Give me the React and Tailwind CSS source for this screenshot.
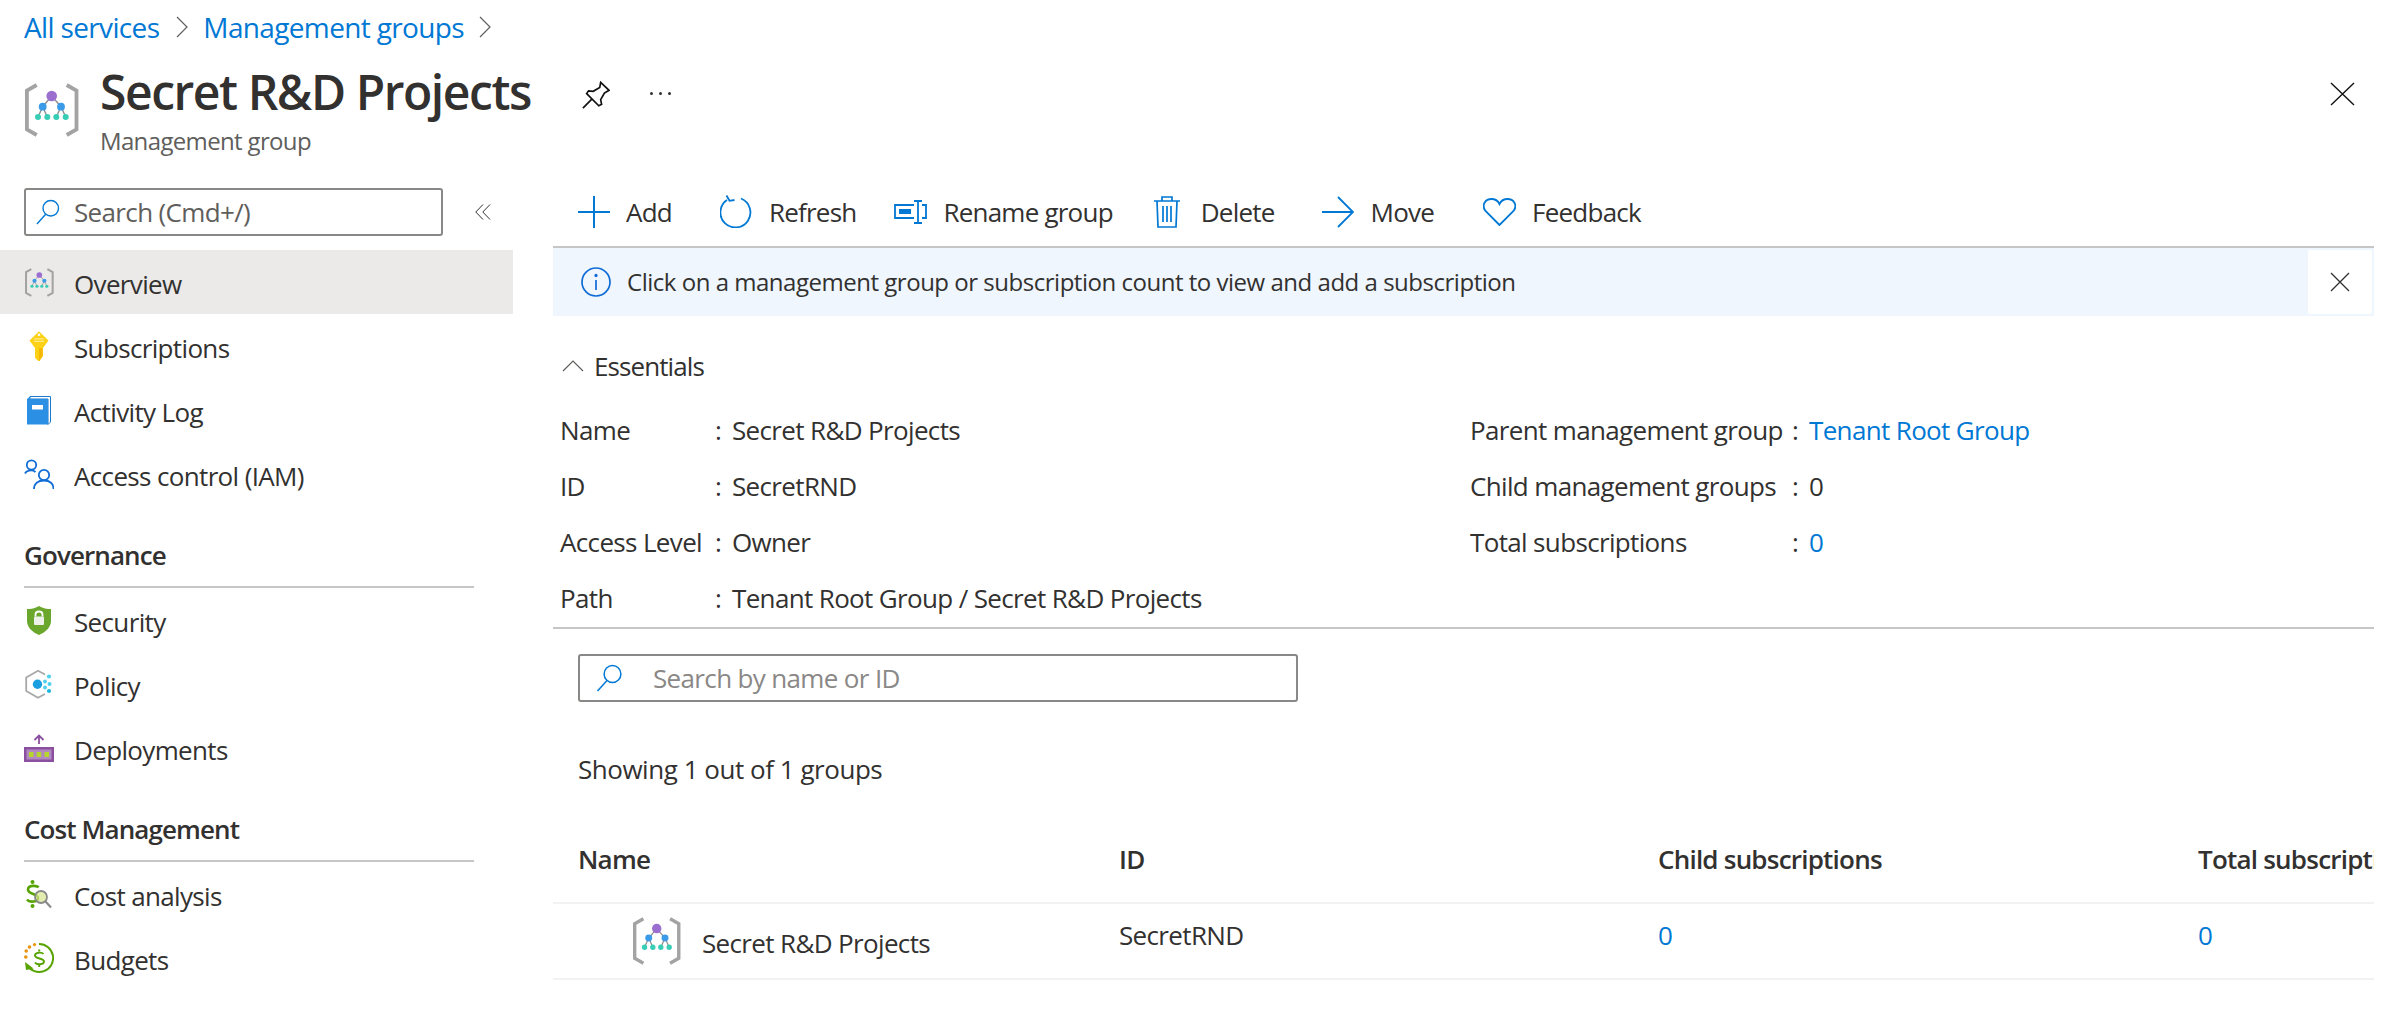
import React from 'react';

const BLUE = '#0078d4';

const GroupIcon = ({ className }) => (
  <svg viewBox="0 0 54 54" className={className} fill="none">
    <path d="M11.7 2 L1.9 7.7 V46.3 L11.7 52" stroke="#a3a3a3" strokeWidth="3.8" />
    <path d="M41.7 2 L51.5 7.7 V46.3 L41.7 52" stroke="#a3a3a3" strokeWidth="3.8" />
    <path d="M26.7 13 L17.7 23.7 L13 34 M17.7 23.7 L22.3 34 M26.7 13 L36 23.7 L31.3 34 M36 23.7 L40.7 34" stroke="#8f8f8f" strokeWidth="1.4" />
    <circle cx="26.7" cy="13" r="5.3" fill="#9a6fd0" />
    <circle cx="17.7" cy="23.7" r="3.9" fill="#3b9be8" />
    <circle cx="36" cy="23.7" r="3.9" fill="#3b9be8" />
    <circle cx="13" cy="34" r="3" fill="#38cdb5" />
    <circle cx="22.3" cy="34" r="3" fill="#38cdb5" />
    <circle cx="31.3" cy="34" r="3" fill="#38cdb5" />
    <circle cx="40.7" cy="34" r="3" fill="#38cdb5" />
  </svg>
);

const SearchIcon = ({ className }) => (
  <svg viewBox="0 0 26 28" className={className} fill="none" stroke={BLUE} strokeWidth="1.5">
    <circle cx="16" cy="10" r="8.4" />
    <path d="M10.5 16.5 L1 27" />
  </svg>
);

const KeyIcon = () => (
  <svg viewBox="0 0 20 30" className="w-[20px] h-[30px]">
    <path d="M10 .8 L19 9.5 L13.5 17 V25 L10 30 L6.5 27 V17 L1 9.5 Z" fill="#fcd116" stroke="#fcd116" strokeWidth="1" strokeLinejoin="round" />
    <path d="M10 17 H13.5 V25 L10 30 Z" fill="#f5b700" />
    <circle cx="10" cy="3.8" r="1.3" fill="#fff" />
    <path d="M5 7.8 H15 M5 10.4 H15" stroke="#ffe98a" strokeWidth="1.2" />
  </svg>
);

const BookIcon = () => (
  <svg viewBox="0 0 24 29" className="w-[24px] h-[29px]">
    <path d="M3 0.5 H23.5 V26 L21 28.5 H21 V3 H3 Z" fill="#fff" stroke="#1f78c8" strokeWidth="1" />
    <path d="M3 0.5 L0 3 V28.5 H21 V3 H3 Z" fill="#2b8fe3" />
    <rect x="5" y="9" width="11" height="4.5" fill="#fff" />
  </svg>
);

const PeopleIcon = () => (
  <svg viewBox="0 0 30 30" className="w-[30px] h-[30px]" fill="none" stroke="#0f6cd6" strokeWidth="1.8">
    <circle cx="7.5" cy="6" r="4.7" />
    <path d="M1 14.5 C2 12.5 4 11.3 7 11.3 C9 11.3 10.5 12 11.5 13" />
    <circle cx="20" cy="16" r="5.2" />
    <path d="M10 30 C10 24.5 14 21.5 20 21.5 C26 21.5 29.5 24.5 29.5 30" />
  </svg>
);

const ShieldIcon = () => (
  <svg viewBox="0 0 24 29" className="w-[24px] h-[29px]">
    <path d="M12 0 C16 2.5 20 3 24 3 V15 C24 21 19 26 12 29 C5 26 0 21 0 15 V3 C4 3 8 2.5 12 0 Z" fill="#6aa72c" />
    <path d="M8.5 10.5 V8.5 C8.5 4.5 15.5 4.5 15.5 8.5 V10.5" fill="none" stroke="#fff" strokeWidth="1.8" />
    <rect x="7" y="10.5" width="10" height="8.5" rx="1" fill="#eef1ea" />
  </svg>
);

const PolicyIcon = () => (
  <svg viewBox="0 0 28 29" className="w-[28px] h-[29px]">
    <path d="M20 4.5 L13 .8 L1.2 7.5 V21 L13 27.8 L20 24" fill="none" stroke="#a8a8a8" strokeWidth="1.8" />
    <circle cx="12.5" cy="14.2" r="4.7" fill="#1c9fe0" />
    <circle cx="24" cy="6.5" r="2.1" fill="#4fd0f0" />
    <circle cx="20" cy="11.5" r="1.9" fill="#4fd0f0" />
    <circle cx="24.5" cy="14" r="2" fill="#4fd0f0" />
    <circle cx="20" cy="17.5" r="1.9" fill="#4fd0f0" />
    <circle cx="24" cy="21" r="2.1" fill="#1fb6de" />
  </svg>
);

const DeployIcon = () => (
  <svg viewBox="0 0 30 28" className="w-[30px] h-[28px]">
    <path d="M15 10 V1.5 M10.5 6 L15 1.5 L19.5 6" fill="none" stroke="#8a4f9e" strokeWidth="1.8" />
    <rect x="0" y="13" width="30" height="15" fill="#8a4f9e" />
    <rect x="2.5" y="15.5" width="25" height="10" fill="#b18abf" />
    <rect x="5" y="18" width="4.5" height="5" fill="#b6d62b" />
    <rect x="12.7" y="18" width="4.5" height="5" fill="#b6d62b" />
    <rect x="20.5" y="18" width="4.5" height="5" fill="#b6d62b" />
  </svg>
);

const CostIcon = () => (
  <svg viewBox="0 0 26 29" className="w-[26px] h-[29px]" fill="none">
    <circle cx="6.5" cy="2" r="2" fill="#57a300" />
    <circle cx="6.5" cy="26" r="2" fill="#57a300" />
    <path d="M12.5 7.5 C11 5.5 2 4.5 2 9.5 C2 14.5 12 13.5 12 18 C12 22.5 3 22.5 1 19.5" stroke="#57a300" strokeWidth="2.6" />
    <circle cx="15" cy="17" r="6" fill="#d8e68e" fillOpacity="0.7" stroke="#8a8a8a" strokeWidth="1.8" />
    <path d="M19.5 21.5 L25 27.5" stroke="#8a8a8a" strokeWidth="2.2" />
  </svg>
);

const BudgetIcon = () => (
  <svg viewBox="0 0 30 30" className="w-[30px] h-[30px]" fill="none">
    <circle cx="1.8" cy="14" r="1.8" fill="#e8940c" />
    <circle cx="2.2" cy="8" r="1.8" fill="#e8940c" />
    <circle cx="5.5" cy="4" r="1.8" fill="#e8940c" />
    <circle cx="10.5" cy="1.6" r="1.6" fill="#e8940c" />
    <path d="M15 1 A14 14 0 1 1 3 22" stroke="#57a300" strokeWidth="1.9" />
    <path d="M1 19 L2 27 L9.5 25.5 Z" fill="#57a300" />
    <path d="M19.5 11 C18 9 11 9 11 12.5 C11 16 20 15 20 18.5 C20 22 12.5 22 11 19.5" stroke="#57a300" strokeWidth="1.9" />
    <path d="M15.2 6.5 V8.5 M15.2 21.5 V24" stroke="#57a300" strokeWidth="2" />
  </svg>
);

const ToolItem = ({ icon, label, className }) => (
  <div className={`flex items-center ${className}`}>
    {icon}
    <span>{label}</span>
  </div>
);

const NavItem = ({ icon, label, active }) => (
  <div className={`h-[64px] flex items-center pl-6 ${active ? 'bg-[#ebeae8]' : ''}`}>
    <div className="w-[30px] flex justify-center">{icon}</div>
    <span className="ml-5 pt-1">{label}</span>
  </div>
);

const NavHeading = ({ label, className }) => (
  <div className={`ml-6 w-[450px] h-[53px] pb-[12px] flex items-center border-b-2 border-[#c8c6c4] font-semibold tracking-[-0.035em] ${className}`}>{label}</div>
);

const Row = ({ label, value, link, labelWidth }) => (
  <div className="h-[56px] flex items-center">
    <div className={labelWidth}>{label}</div>
    <div className="w-[17px]">:</div>
    <div className={link ? 'text-[#0078d4]' : ''}>{value}</div>
  </div>
);

export default function App() {
  return (
    <div className="w-[2400px] h-[1010px] overflow-hidden bg-white text-[#323130] text-[26px] leading-[34px] tracking-[-0.025em] font-['Open_Sans',sans-serif]">
      {/* Breadcrumb */}
      <div className="h-[56px] pb-[2px] flex items-center pl-6 text-[#0078d4] text-[28px]">
        <span>All services</span>
        <svg viewBox="0 0 12 22" className="w-[12px] h-[22px] ml-[17px] mr-[15px]" fill="none" stroke="#605e5c" strokeWidth="1.2"><path d="M1 1 L11 11 L1 21" /></svg>
        <span>Management groups</span>
        <svg viewBox="0 0 12 22" className="w-[12px] h-[22px] ml-[15px]" fill="none" stroke="#605e5c" strokeWidth="1.2"><path d="M1 1 L11 11 L1 21" /></svg>
      </div>

      {/* Title bar */}
      <div className="h-[132px] flex pl-[25px] pr-[45px]">
        <GroupIcon className="w-[54px] h-[54px] mt-[27px]" />
        <div className="ml-[21px] w-[482px] flex flex-col">
          <div className="text-[48px] leading-[64px] font-semibold mt-[4px] tracking-[-0.03em] whitespace-nowrap">Secret R&amp;D Projects</div>
          <div className="text-[24px] leading-[32px] text-[#605e5c] mt-[1px]">Management group</div>
        </div>
        <svg viewBox="0 0 30 30" className="w-[28px] h-[28px] mt-[25px]" fill="none" stroke="#111" strokeWidth="1.8">
          <path d="M20 1.5 L29 10 L24 13 L20 20 L21 25 L18 26.5 L5 13.5 L7 10.5 L12 11 L19 7 Z" />
          <path d="M10.5 19.5 L1 29" />
        </svg>
        <div className="ml-[40px] mt-[36px] flex gap-[6px]">
          <span className="w-[3px] h-[3px] bg-[#323130] rounded-full" />
          <span className="w-[3px] h-[3px] bg-[#323130] rounded-full" />
          <span className="w-[3px] h-[3px] bg-[#323130] rounded-full" />
        </div>
        <svg viewBox="0 0 25 24" className="w-[25px] h-[24px] ml-auto mt-[26px]" fill="none" stroke="#111" strokeWidth="1.4"><path d="M1 1 L24 23 M24 1 L1 23" /></svg>
      </div>

      <div className="flex">
        {/* Sidebar */}
        <aside className="w-[513px] shrink-0">
          <div className="h-[62px] flex items-start pl-6">
            <div className="w-[419px] h-[48px] flex items-center rounded-[3px] border-2 border-[#8a8886] pl-[10px] text-[#605e5c]">
              <SearchIcon className="w-[24px] h-[26px]" />
              <span className="ml-[14px]">Search (Cmd+/)</span>
            </div>
            <svg viewBox="0 0 16 16" className="w-[16px] h-[16px] ml-[32px] mt-[16px]" fill="none" stroke="#323130" strokeWidth="1"><path d="M8 .5 L.8 8 L8 15.5 M15 .5 L7.8 8 L15 15.5" /></svg>
          </div>
          <NavItem active label="Overview" icon={<GroupIcon className="w-[29px] h-[29px]" />} />
          <NavItem label="Subscriptions" icon={<KeyIcon />} />
          <NavItem label="Activity Log" icon={<BookIcon />} />
          <NavItem label="Access control (IAM)" icon={<PeopleIcon />} />
          <NavHeading label="Governance" className="mt-[29px]" />
          <NavItem label="Security" icon={<ShieldIcon />} />
          <NavItem label="Policy" icon={<PolicyIcon />} />
          <NavItem label="Deployments" icon={<DeployIcon />} />
          <NavHeading label="Cost Management" className="mt-[29px]" />
          <NavItem label="Cost analysis" icon={<CostIcon />} />
          <NavItem label="Budgets" icon={<BudgetIcon />} />
        </aside>

        {/* Main */}
        <main className="ml-[40px] w-[1821px] overflow-hidden">
          <div className="h-[60px] flex items-center pl-[25px] pb-[11px] border-b-2 border-[#c8c6c4] tracking-[-0.03em]">
            <ToolItem label="Add" className="gap-[16px]" icon={
              <svg viewBox="0 0 32 32" className="w-[32px] h-[32px]" fill="none" stroke={BLUE} strokeWidth="2"><path d="M16 0 V32 M0 16 H32" /></svg>
            } />
            <ToolItem label="Refresh" className="ml-[48px] gap-[16px]" icon={
              <svg viewBox="0 0 33 33" className="w-[33px] h-[33px]" fill="none" stroke={BLUE} strokeWidth="1.8"><path d="M21 3.5 A15 15 0 1 1 7 5 M6.5 .5 L9.5 5.8 L14.5 5" /></svg>
            } />
            <ToolItem label="Rename group" className="ml-[38px] gap-[16px]" icon={
              <svg viewBox="0 0 33 24" className="w-[33px] h-[24px]" fill="none" stroke={BLUE} strokeWidth="1.8"><path d="M20 5 H1 V18 H20 M28 5 H32 V18 H28 M20 1 H28 M24 1 V23 M20 23 H28" /><rect x="5" y="9" width="12" height="5" fill={BLUE} stroke="none" /></svg>
            } />
            <ToolItem label="Delete" className="ml-[41px] gap-[21px]" icon={
              <svg viewBox="0 0 26 32" className="w-[26px] h-[32px]" fill="none" stroke={BLUE} strokeWidth="1.7"><path d="M0 5 H26 M8 5 V1 H18 V5 M3 5 L4 31 H22 L23 5 M9 10 V26 M13 10 V26 M17 10 V26" /></svg>
            } />
            <ToolItem label="Move" className="ml-[47px] gap-[17px]" icon={
              <svg viewBox="0 0 32 32" className="w-[32px] h-[32px]" fill="none" stroke={BLUE} strokeWidth="1.8"><path d="M0 16 H31 M16 1 L31 16 L16 31" /></svg>
            } />
            <ToolItem label="Feedback" className="ml-[49px] gap-[16px]" icon={
              <svg viewBox="0 0 33 28" className="w-[33px] h-[28px]" fill="none" stroke={BLUE} strokeWidth="1.8"><path d="M16.5 27 L2.5 13 C-2 7 2.5 1 8.5 1 C12 1 15 3 16.5 6 C18 3 21 1 24.5 1 C30.5 1 35 7 30.5 13 Z" /></svg>
            } />
          </div>

          <div className="h-[68px] bg-[#eff6fe] flex items-center pl-[28px] relative">
            <svg viewBox="0 0 30 30" className="w-[30px] h-[30px]" fill="none" stroke="#0f6cd6" strokeWidth="1.7"><circle cx="15" cy="15" r="14" /><path d="M15 13 V23" /><circle cx="15" cy="8.5" r=".8" /></svg>
            <span className="ml-[16px] text-[24px] tracking-[-0.02em]">Click on a management group or subscription count to view and add a subscription</span>
            <div className="absolute right-[2px] top-[2px] w-[64px] h-[64px] bg-white rounded-[2px] flex items-center justify-center">
              <svg viewBox="0 0 20 20" className="w-[20px] h-[20px]" fill="none" stroke="#323130" strokeWidth="1.3"><path d="M1 1 L19 19 M19 1 L1 19" /></svg>
            </div>
          </div>

          {/* Essentials */}
          <div className="h-[70px] pt-[30px] flex items-center pl-[9px] gap-[10px]">
            <svg viewBox="0 0 22 12" className="w-[22px] h-[12px]" fill="none" stroke="#605e5c" strokeWidth="1.2"><path d="M1 11 L11 1 L21 11" /></svg>
            <span className="tracking-[-0.035em]">Essentials</span>
          </div>
          <div className="h-[243px] flex pl-[7px] pt-[16px] border-b-2 border-[#c8c6c4]">
            <div className="w-[910px]">
              <Row label="Name" value="Secret R&D Projects" labelWidth="w-[155px]" />
              <Row label="ID" value="SecretRND" labelWidth="w-[155px]" />
              <Row label="Access Level" value="Owner" labelWidth="w-[155px]" />
              <Row label="Path" value="Tenant Root Group / Secret R&D Projects" labelWidth="w-[155px]" />
            </div>
            <div>
              <Row label="Parent management group" value="Tenant Root Group" link labelWidth="w-[322px]" />
              <Row label="Child management groups" value="0" labelWidth="w-[322px]" />
              <Row label="Total subscriptions" value="0" link labelWidth="w-[322px]" />
            </div>
          </div>

          {/* Search and table */}
          <div className="mt-[25px] ml-[25px] w-[720px] h-[48px] flex items-center rounded-[3px] border-2 border-[#8a8886] pl-[16px] text-[#8a8886]">
            <SearchIcon className="w-[27px] h-[28px]" />
            <span className="ml-[30px]">Search by name or ID</span>
          </div>
          <div className="ml-[25px] mt-[50px] h-[34px] tracking-[-0.018em]">Showing 1 out of 1 groups</div>

          <div className="mt-[54px] h-[64px] pb-[25px] flex items-center border-b-2 border-[#f3f2f1] font-semibold tracking-[-0.03em] pl-[25px] whitespace-nowrap">
            <div className="w-[541px] shrink-0">Name</div>
            <div className="w-[539px] shrink-0">ID</div>
            <div className="w-[540px] shrink-0">Child subscriptions</div>
            <div className="shrink-0">Total subscriptions</div>
          </div>
          <div className="h-[76px] flex border-b-2 border-[#f3f2f1] pl-[25px] whitespace-nowrap">
            <div className="w-[541px] shrink-0 flex items-center pl-[55px]">
              <GroupIcon className="w-[48px] h-[48px]" />
              <span className="ml-[21px] pt-[4px]">Secret R&amp;D Projects</span>
            </div>
            <div className="w-[539px] shrink-0 pt-[14px]">SecretRND</div>
            <div className="w-[540px] shrink-0 pt-[14px] text-[#0078d4]">0</div>
            <div className="shrink-0 pt-[14px] text-[#0078d4]">0</div>
          </div>
        </main>
      </div>
    </div>
  );
}
